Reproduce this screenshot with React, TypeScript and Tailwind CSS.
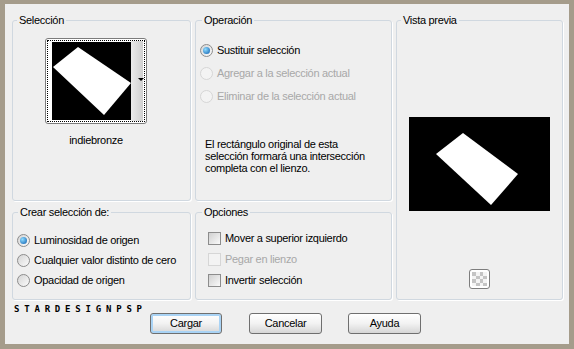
import React from 'react'

const ui = "font-['Liberation_Sans',Arial,sans-serif] text-[11px] leading-[15px] tracking-[-0.3px]"

interface RadioProps {
  label: string
  checked?: boolean
  disabled?: boolean
}

const Radio: React.FC<RadioProps> = ({ label, checked, disabled }) => (
  <div className="flex items-center h-[15px]">
    <span
      className={`w-[13px] h-[13px] rounded-full border flex items-center justify-center shrink-0 ${
        disabled
          ? 'border-[#d6d6d6] bg-[#f3f3f3]'
          : 'border-[#8c8c8c] bg-linear-to-br from-[#d4d4d4] to-[#fbfbfb]'
      }`}
    >
      {checked && (
        <span className="w-[7px] h-[7px] rounded-full bg-[radial-gradient(circle_at_35%_35%,#8fdcff,#0b5cae)]" />
      )}
    </span>
    <span className={`ml-[4px] whitespace-nowrap ${disabled ? 'text-[#a8a8a8]' : 'text-black'}`}>{label}</span>
  </div>
)

const Check: React.FC<RadioProps> = ({ label, disabled }) => (
  <div className="flex items-center h-[15px]">
    <span
      className={`w-[13px] h-[13px] border shrink-0 ${
        disabled
          ? 'border-[#d6d6d6] bg-[#f3f3f3]'
          : 'border-[#8c8c8c] bg-linear-to-br from-[#d0d0d0] to-[#fafafa]'
      }`}
    />
    <span className={`ml-[4px] whitespace-nowrap ${disabled ? 'text-[#a8a8a8]' : 'text-black'}`}>{label}</span>
  </div>
)

const Group: React.FC<{ title: string; indent: string; className?: string; children?: React.ReactNode }> = ({
  title,
  indent,
  className = '',
  children,
}) => (
  <fieldset
    className={`border border-[#d0d8e0] rounded-[3px] shadow-[1px_1px_0_#ffffff] min-w-0 ${className}`}
  >
    <legend className={`${indent} px-[2px] leading-[13px]`}>{title}</legend>
    {children}
  </fieldset>
)

const Btn: React.FC<{ label: string; primary?: boolean; className?: string }> = ({
  label,
  primary,
  className = '',
}) => (
  <button
    className={`h-[21px] rounded-[3px] border border-[#6f6f6f] bg-linear-to-b from-[#ffffff] via-[#f2f2f2] to-[#d6d6d6] text-black ${
      primary ? 'shadow-[inset_0_0_0_2px_#a9d3f5]' : ''
    } ${className}`}
  >
    {label}
  </button>
)

export default function App() {
  return (
    <div
      className={`w-[574px] h-[349px] border-t-4 border-x-[5px] border-b-[5px] border-[#a59c8b] bg-[#efefef] ${ui}`}
    >
      <div className="grid grid-cols-[179px_197px_167px] grid-rows-[187px_94px] gap-x-[4px] gap-y-[5px] pl-[7px] pt-[10px]">
        {/* Selección */}
        <Group title="Selección" indent="ml-[4px]">
          <div className="ml-[32px] mt-[11px] w-[102px]">
            <div className="w-[102px] h-[86px] border border-[#7b7b7b] rounded-[3px] bg-white p-px">
              <div className="w-full h-full border border-dotted border-black flex">
                <div className="ml-[4px] mt-px w-[79px] h-[78px] bg-black">
                  <svg width="79" height="78" viewBox="0 0 79 78">
                    <polygon points="26,5 1,25 52,73 79,41" fill="#ffffff" />
                  </svg>
                </div>
                <div className="relative w-[12px] h-[80px] bg-linear-to-r from-[#ebebeb] to-[#cfcfcf]">
                  <span className="absolute right-[-1px] top-[37px] w-0 h-0 border-x-[3px] border-x-transparent border-t-[3px] border-t-black" />
                </div>
              </div>
            </div>
            <div className="mt-[9px] text-center">indiebronze</div>
          </div>
        </Group>

        {/* Operación */}
        <Group title="Operación" indent="ml-[6px]">
          <div className="ml-[4px] mt-[16px] flex flex-col gap-[8px]">
            <Radio label="Sustituir selección" checked />
            <Radio label="Agregar a la selección actual" disabled />
            <Radio label="Eliminar de la selección actual" disabled />
          </div>
          <p className="mt-[34px] ml-[9px] leading-[12px]">
            El rectángulo original de esta
            <br />
            selección formará una intersección
            <br />
            completa con el lienzo.
          </p>
        </Group>

        {/* Vista previa */}
        <Group title="Vista previa" indent="ml-[4px]" className="row-span-2 flex flex-col items-center">
          <div className="mt-[90px] w-[141px] h-[94px] bg-black">
            <svg width="141" height="94" viewBox="0 0 141 94">
              <polygon points="54,16 27,37 82,88 109,57" fill="#ffffff" />
            </svg>
          </div>
          <div className="mt-[58px] w-[21px] h-[20px] rounded-[3px] border border-[#7d7d7d] bg-white p-[2px]">
            <div className="grid grid-cols-4 grid-rows-4 w-full h-full">
              {[0, 1, 2, 3].map((r) =>
                [0, 1, 2, 3].map((c) => (
                  <span key={`${r}-${c}`} className={(r + c) % 2 === 0 ? 'bg-[#c4c4c4]' : 'bg-[#f4f4f4]'} />
                ))
              )}
            </div>
          </div>
        </Group>

        {/* Crear selección de */}
        <Group title="Crear selección de:" indent="ml-[5px]">
          <div className="ml-[4px] mt-[14px] flex flex-col gap-[5px]">
            <Radio label="Luminosidad de origen" checked />
            <Radio label="Cualquier valor distinto de cero" />
            <Radio label="Opacidad de origen" />
          </div>
        </Group>

        {/* Opciones */}
        <Group title="Opciones" indent="ml-[6px]">
          <div className="ml-[12px] mt-[12px] flex flex-col gap-[6px]">
            <Check label="Mover a superior izquierdo" />
            <Check label="Pegar en lienzo" disabled />
            <Check label="Invertir selección" />
          </div>
        </Group>
      </div>

      <div className="flex items-start">
        <div className="mt-[5px] ml-[9px] w-[136px] font-['DejaVu_Sans_Mono',monospace] font-bold text-[9px] leading-[8px] tracking-[4.8px] text-black">
          STARDESIGNPSP
        </div>
        <div className="mt-[13px] flex gap-[27px]">
          <Btn label="Cargar" primary className="w-[72px]" />
          <Btn label="Cancelar" className="w-[73px]" />
          <Btn label="Ayuda" className="w-[73px] ml-[-1px]" />
        </div>
      </div>
    </div>
  )
}
